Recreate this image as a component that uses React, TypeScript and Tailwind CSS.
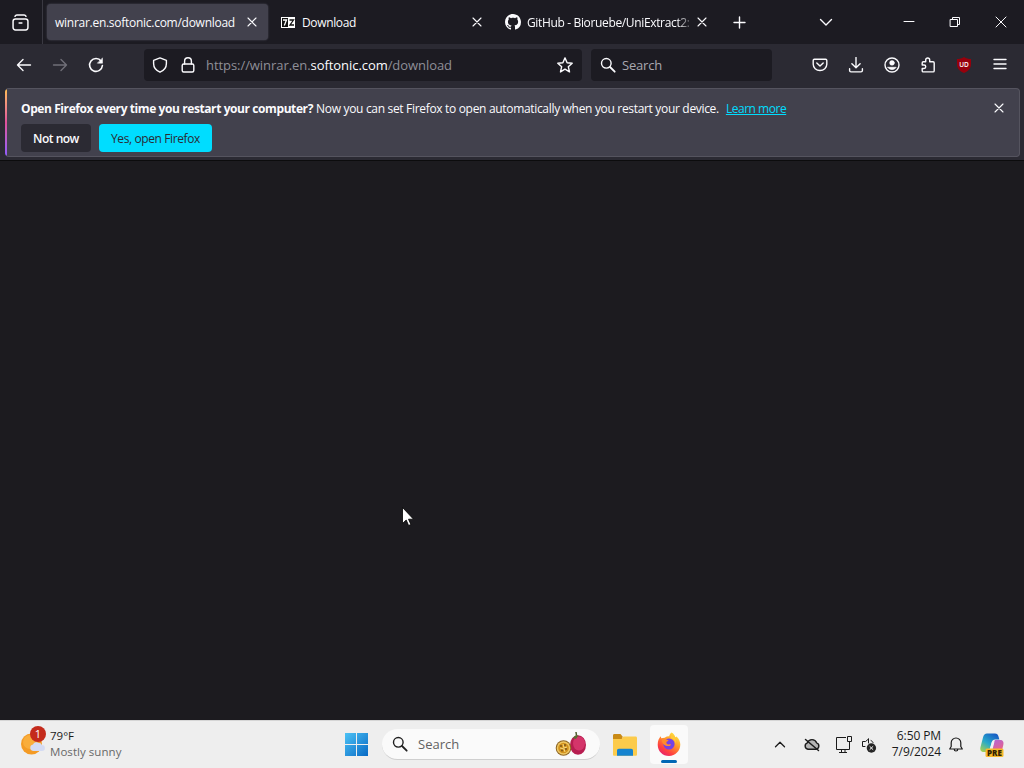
import type { ReactNode } from "react";

type IconProps = {
  children: ReactNode;
  className?: string;
};

// 16px grid, stroked with the current text colour
const Icon = ({ children, className = "size-4" }: IconProps) => (
  <svg
    viewBox="0 0 16 16"
    className={`shrink-0 ${className}`}
    fill="none"
    stroke="currentColor"
    strokeWidth="1.4"
    strokeLinecap="round"
    strokeLinejoin="round"
  >
    {children}
  </svg>
);

const CloseIcon = () => (
  <Icon>
    <path d="M4 4l8 8M12 4l-8 8" strokeWidth="1.1" />
  </Icon>
);

const SearchIcon = ({ className }: { className?: string }) => (
  <Icon className={className}>
    <circle cx="6.3" cy="6.3" r="4.8" />
    <path d="M10 10l4.7 4.7" strokeWidth="1.8" />
  </Icon>
);

const GitHubLogo = () => (
  <svg viewBox="0 0 16 16" className="size-4 shrink-0" fill="currentColor">
    <path d="M8 0C3.58 0 0 3.58 0 8c0 3.54 2.29 6.53 5.47 7.59.4.07.55-.17.55-.38 0-.19-.01-.82-.01-1.49-2.01.37-2.53-.49-2.69-.94-.09-.23-.48-.94-.82-1.13-.28-.15-.68-.52-.01-.53.63-.01 1.08.58 1.23.82.72 1.21 1.87.87 2.33.66.07-.52.28-.87.51-1.07-1.78-.2-3.64-.89-3.64-3.95 0-.87.31-1.59.82-2.15-.08-.2-.36-1.02.08-2.12 0 0 .67-.21 2.2.82.64-.18 1.32-.27 2-.27s1.36.09 2 .27c1.53-1.04 2.2-.82 2.2-.82.44 1.1.16 1.92.08 2.12.51.56.82 1.27.82 2.15 0 3.07-1.87 3.75-3.65 3.95.29.25.54.73.54 1.48 0 1.07-.01 1.93-.01 2.2 0 .21.15.46.55.38A8.01 8.01 0 0 0 16 8c0-4.42-3.58-8-8-8z" />
  </svg>
);

const SevenZipLogo = () => (
  <svg viewBox="0 0 14 11" className="h-[11px] w-3.5 shrink-0">
    <path d="M0 0h14v11H0z" fill="#fff" />
    <path d="M1 1h6v9H1z" fill="#111" />
    <path d="M2 3h3.5L3.3 8.5" fill="none" stroke="#fff" strokeWidth="1.3" />
    <path d="M8.5 3h4L9 8h4" fill="none" stroke="#111" strokeWidth="1.3" />
  </svg>
);

const TabBar = () => (
  <div className="flex h-11 items-center bg-[#1c1b22] text-[12px]">
    <div className="flex h-full w-[43px] items-center justify-center border-r border-[#3a3942] pr-0.5">
      <Icon className="size-[17px]">
        <rect x="1" y="4.7" width="14" height="10.3" rx="2.2" />
        <path d="M2.8 2.2C3.2 1.4 3.8 1 4.6 1h6.8c.8 0 1.4.4 1.8 1.2" />
        <path d="M6.7 8.4h2.6" />
      </Icon>
    </div>

    <div className="ml-1 flex h-9 w-[221px] items-center rounded bg-[#42414d] px-2 shadow-[0_0_2px_#52515e]">
      <span className="flex-1 pt-0.5 tracking-[-0.27px] whitespace-nowrap">
        winrar.en.softonic.com/download
      </span>
      <CloseIcon />
    </div>

    <div className="ml-1 flex h-9 w-[221px] items-center pr-2 pl-[9px]">
      <SevenZipLogo />
      <span className="ml-[7px] flex-1 pt-0.5 tracking-[-0.35px]">Download</span>
      <CloseIcon />
    </div>

    <div className="ml-1 flex h-9 w-[221px] items-center px-2">
      <GitHubLogo />
      <span className="ml-1.5 flex-1 mask-r-from-90% mask-r-to-100% pt-0.5 tracking-[-0.35px] whitespace-nowrap">
        GitHub - Bioruebe/UniExtract2:
      </span>
      <CloseIcon />
    </div>

    <Icon className="ml-3.5 size-4">
      <path d="M7.5 3v11M2 8.5h11" />
    </Icon>

    <div className="flex flex-1 items-center justify-end">
      <Icon className="mr-[52px] size-4">
        <path d="M2.5 5.5L8 11l5.5-5.5" />
      </Icon>
      <div className="flex w-[46px] justify-center">
        <Icon>
          <path d="M3 7.5h10" strokeWidth="1" />
        </Icon>
      </div>
      <div className="flex w-[46px] justify-center">
        <Icon>
          <path d="M3.5 5.5h7v7h-7zM5.5 5.5v-2h7v7h-2" strokeWidth="1" />
        </Icon>
      </div>
      <div className="flex w-[46px] justify-center">
        <Icon>
          <path d="M3 3l10 10M13 3L3 13" strokeWidth="1" />
        </Icon>
      </div>
    </div>
  </div>
);

const NavBar = () => (
  <div className="flex h-[42px] items-center bg-[#2b2a33] text-[13px]">
    <div className="flex w-36 pl-1.5">
      <div className="flex w-9 justify-center">
        <Icon>
          <path d="M14.5 8h-13M7 2.5L1.5 8 7 13.5" />
        </Icon>
      </div>
      <div className="flex w-9 justify-center text-[#706f78]">
        <Icon>
          <path d="M1.5 8h13M9 2.5L14.5 8 9 13.5" />
        </Icon>
      </div>
      <div className="flex w-9 justify-center">
        <Icon>
          <path d="M13.2 4.2A6.4 6.4 0 1 0 14.4 8.5" strokeWidth="1.6" />
          <path d="M14.5 1.2v5H9.6z" fill="currentColor" strokeWidth=".5" />
        </Icon>
      </div>
    </div>

    <div className="flex h-8 w-[438px] items-center rounded bg-[#1c1b22] pr-[9px] pl-2">
      <Icon>
        <path d="M8 .9l6.4 2.4v3.3c0 4-2.4 7-6.4 8.6-4-1.6-6.4-4.6-6.4-8.6V3.3z" />
      </Icon>
      <Icon className="ml-3 size-4">
        <rect x="2.2" y="7" width="11.6" height="8" rx="1.5" />
        <path d="M4.6 7V4.2a3.4 3.4 0 0 1 6.8 0V7" />
      </Icon>
      <span className="ml-2.5 flex-1 pt-0.5 tracking-[-0.06px] text-[#8f8f98]">
        https://winrar.en.<span className="text-[#fbfbfe]">softonic.com</span>/download
      </span>
      <Icon>
        <path d="M8 .9l2.1 4.8 5.1.5-3.9 3.5 1.2 5.2L8 12.2l-4.5 2.7 1.2-5.2L.8 6.2l5.1-.5z" />
      </Icon>
    </div>

    <div className="ml-[9px] flex h-8 w-[181px] items-center rounded bg-[#1c1b22] pl-[9px]">
      <SearchIcon className="size-4" />
      <span className="ml-1.5 pt-0.5 tracking-[-0.2px] text-[#a9a8b0]">Search</span>
    </div>

    <div className="ml-[30px] flex">
      <div className="flex w-9 justify-center">
        <Icon>
          <path d="M2.4 2.2h11.2c.7 0 1.2.5 1.2 1.2v3.8a6.8 6.3 0 0 1-13.6 0V3.4c0-.7.5-1.2 1.2-1.2z" />
          <path d="M4.8 6L8 9.1 11.2 6" />
        </Icon>
      </div>
      <div className="flex w-9 justify-center">
        <Icon>
          <path d="M8 .5v10M3.9 6.7L8 10.8l4.1-4.1M1.6 11.7v1.8c0 .8.6 1.4 1.4 1.4h10c.8 0 1.4-.6 1.4-1.4v-1.8" />
        </Icon>
      </div>
      <div className="flex w-9 justify-center">
        <Icon>
          <circle cx="8" cy="8" r="7" />
          <circle cx="8" cy="5.9" r="2.4" fill="currentColor" strokeWidth=".5" />
          <path
            d="M3.8 10.3h8.4A4.6 4.6 0 0 1 8 12.6a4.6 4.6 0 0 1-4.2-2.3z"
            fill="currentColor"
            strokeWidth=".7"
          />
        </Icon>
      </div>
      <div className="flex w-9 justify-center">
        <Icon>
          <path d="M2.2 8V6c0-.7.4-1.2 1.1-1.2h2.4V3a2 2 0 0 1 4 0v1.8h3.4c.7 0 1.1.5 1.1 1.2v7.7c0 .7-.4 1.2-1.1 1.2H3.3c-.7 0-1.1-.5-1.1-1.2v-2.2H4a1.75 1.75 0 0 0 0-3.5z" />
        </Icon>
      </div>
      <div className="flex w-9 justify-center">
        <svg viewBox="0 0 16 16" className="size-4">
          <path
            d="M8 0c2.3 1.5 4.4 2 7 2v5c0 4.5-2.6 7.2-7 9-4.4-1.8-7-4.5-7-9V2c2.6 0 4.7-.5 7-2z"
            fill="#97000c"
          />
          <text x="8" y="9.8" textAnchor="middle" fill="#fff" fontSize="6.5" fontWeight="600">
            UD
          </text>
        </svg>
      </div>
      <div className="flex w-9 justify-center">
        <Icon>
          <path d="M2 2.5h12M2 7h12M2 11.5h12" />
        </Icon>
      </div>
    </div>
  </div>
);

const NotificationBar = () => (
  <div className="h-[75px] border-b border-[#0c0c0d] bg-[#2b2a33] pt-0.5 pr-1 pl-[5px]">
    <div className="flex h-[69px] overflow-hidden rounded border border-l-0 border-[#55545f] bg-[#42414d] text-[12px]">
      <div className="w-0.5 bg-linear-to-b from-[#ffbd4f] via-[#e0509a] to-[#9059ff]" />
      <div className="flex-1 pt-[11px] pl-3.5">
        <p className="h-[18px] leading-[18px] whitespace-nowrap">
          <b className="tracking-[-0.41px]">Open Firefox every time you restart your computer?</b>{" "}
          <span className="tracking-[-0.32px]">
            Now you can set Firefox to open automatically when you restart your device.
          </span>
          <a className="ml-[7px] tracking-[-0.47px] text-[#00ddff] underline">Learn more</a>
        </p>
        <div className="mt-1.5 flex gap-2">
          <button className="h-7 w-[70px] rounded bg-[#2b2a33] pt-0.5 font-semibold tracking-[-0.5px] whitespace-nowrap">
            Not now
          </button>
          <button className="h-7 w-[113px] rounded bg-[#00ddff] pt-0.5 tracking-[-0.39px] whitespace-nowrap text-[#2b2a33]">
            Yes, open Firefox
          </button>
        </div>
      </div>
      <div className="pt-[11px] pr-3">
        <CloseIcon />
      </div>
    </div>
  </div>
);

const WeatherIcon = () => (
  <svg viewBox="0 0 28 30" className="h-[30px] w-7 shrink-0">
    <circle cx="11.5" cy="18" r="10.5" fill="#f49b25" />
    <circle cx="10" cy="16" r="7" fill="#f9ad3b" />
    <path
      d="M13 25a3.3 3.3 0 0 1 0-6.5 4 4 0 0 1 6-1.5c1.5-.2 2.5.7 2.8 2a2.9 2.9 0 0 1 .2 6z"
      fill="#d4dbf3"
    />
    <circle cx="18" cy="8" r="8" fill="#c42b1c" />
    <text x="18" y="12" textAnchor="middle" fill="#fff" fontSize="11">
      1
    </text>
  </svg>
);

const WindowsLogo = () => (
  <svg viewBox="0 0 24 24" className="size-6 shrink-0">
    <defs>
      <linearGradient id="win" x1="0" y1="0" x2="1" y2="1">
        <stop offset="0" stopColor="#4cc2f5" />
        <stop offset="1" stopColor="#0869c4" />
      </linearGradient>
    </defs>
    <path d="M1 0h11v11H1zM13 0h11v11H13zM1 12h11v11H1zM13 12h11v11H13z" fill="url(#win)" />
  </svg>
);

const PassionFruit = () => (
  <svg viewBox="0 0 32 26" className="h-[26px] w-8 shrink-0">
    <path d="M21.5 4.5L21 1" stroke="#4d5a2b" strokeWidth="1.5" />
    <ellipse cx="23" cy="14" rx="8" ry="9.8" fill="#b71d50" />
    <ellipse cx="24" cy="12.5" rx="6" ry="7" fill="#d4356a" />
    <path d="M18 7c1-2 3-3 4-3l3 2-2-1-2 3z" fill="#597032" />
    <circle cx="8.5" cy="17" r="7.8" fill="#8c6423" />
    <circle cx="8.5" cy="17" r="6.8" fill="#efc866" />
    <circle cx="8.5" cy="17" r="5.3" fill="#d2921d" />
    <g fill="#7d551b">
      <circle cx="6" cy="15" r="1" />
      <circle cx="10" cy="14" r="1" />
      <circle cx="11" cy="18" r="1" />
      <circle cx="7" cy="19.5" r="1" />
    </g>
    <path d="M8 13l1 4 3-1M5 17l4 1 1 3" stroke="#f5d982" fill="none" />
  </svg>
);

const ExplorerIcon = () => (
  <svg viewBox="0 0 26 24" className="h-6 w-[26px] shrink-0">
    <path d="M1 2.5C1 1.5 1.6 1 2.5 1h6l2 2.5V8H1z" fill="#c98a15" />
    <path
      d="M1 6h8.5l2-2.5h12c1 0 1.5.6 1.5 1.5v16.5c0 .8-.5 1.3-1.3 1.3H2.3c-.8 0-1.3-.5-1.3-1.3z"
      fill="#fccb4b"
    />
    <path d="M5 22.8v-5.3c0-1 .8-1.8 1.8-1.8h12.4c1 0 1.8.8 1.8 1.8v5.3z" fill="#1583cf" />
  </svg>
);

const FirefoxLogo = () => (
  <svg viewBox="0 0 24 24" className="size-6 shrink-0">
    <defs>
      <linearGradient id="fox" x1=".85" y1="0" x2=".2" y2="1">
        <stop offset="0" stopColor="#fff044" />
        <stop offset=".4" stopColor="#ff9a2b" />
        <stop offset=".75" stopColor="#ff4040" />
        <stop offset="1" stopColor="#e21c75" />
      </linearGradient>
    </defs>
    <path
      d="M14.5.5c2 1 3.3 2.7 3.8 4.7l1.2-.8c2.5 2.2 3.8 5 3.8 8.2C23.3 19 18.3 24 12 24S.7 19.2.7 12.7c0-3.8 1.2-6.5 3-8.5l.6 2 3.4-.5c1.4-1 3-1.5 4.5-1.4.3-1.5 1-2.8 2.3-3.8z"
      fill="url(#fox)"
    />
    <circle cx="12" cy="12" r="5.6" fill="#7542e5" />
    <path
      d="M5 7.5c2-1 3.5-.8 5 .3l1.5.5c0 1-1.5 1-2 1.8-.4 1 .2 2 1.5 2.3 1.2.2 2-.3 2.8 0 .4.3-.5 1.5-2.500 1.700-3 .2-5.700-1.800-6.300-4.600z"
      fill="#ff8b2d"
    />
    <path d="M14 6c3 1 5 3.500 4.500 6.500 1-3-.2-6-1.500-7.500L14 4z" fill="#ffcc38" />
  </svg>
);

const CopilotLogo = () => (
  <svg viewBox="0 0 26 26" className="size-[26px] shrink-0">
    <defs>
      <linearGradient id="copilot-a" x1=".7" y1="0" x2="0" y2="1">
        <stop offset="0" stopColor="#175fc5" />
        <stop offset=".5" stopColor="#27a9cb" />
        <stop offset="1" stopColor="#b6d741" />
      </linearGradient>
      <linearGradient id="copilot-b" x1="0" y1="0" x2=".5" y2="1">
        <stop offset="0" stopColor="#a865e5" />
        <stop offset="1" stopColor="#f2627d" />
      </linearGradient>
    </defs>
    <path
      d="M8 1.500h8c2 0 3 1 3.500 3l.9 3h-4.200c-2 0-3 1-3.500 3L11 17c-.5 2-1.500 3-3.500 3H5c-3 0-4.300-2-3.500-5L4 5.500c.6-2.500 2-4 4-4z"
      fill="url(#copilot-a)"
    />
    <path d="M16 8h5c3 0 4 2 3.300 5l-1.500 6c-.5 2-2 3-4 3H9c2 0 3-1 3.500-3L15 10z" fill="url(#copilot-b)" />
    <path d="M13 9.500h2.500l-2 8H10.500z" fill="#eef0f5" />
    <rect x="6.500" y="16.500" width="18" height="8.500" rx="1.500" fill="#f7b92b" />
    <text x="15.500" y="23.800" textAnchor="middle" fontSize="8" fontWeight="800" fill="#332100">
      PRE
    </text>
  </svg>
);

const Taskbar = () => (
  <div className="flex h-12 items-center border-t border-[#d5d5d5] bg-[#eeeeee] text-[12px] text-[#1b1b1b]">
    <div className="flex w-[344px] items-center pb-0.5 pl-5">
      <div className="-mt-1.5">
        <WeatherIcon />
      </div>
      <div className="ml-0.5 text-[11.5px] leading-4">
        <p>79°F</p>
        <p className="tracking-[0.05px] text-[#686868]">Mostly sunny</p>
      </div>
    </div>

    <WindowsLogo />

    <div className="ml-3.5 flex h-[31px] w-[218px] items-center rounded-full border-b border-[#cfcfcf] bg-[#fafafa] pr-[13px] pl-2.5">
      <SearchIcon className="size-4 text-[#202020]" />
      <span className="flex-1 pt-0.5 pl-2.5 text-[13px] text-[#626262]">Search</span>
      <PassionFruit />
    </div>

    <div className="ml-3">
      <ExplorerIcon />
    </div>

    <div className="ml-3 flex h-[39px] w-[38px] flex-col items-center rounded bg-[#fafafa] pt-[7px]">
      <FirefoxLogo />
      <div className="mt-1 h-[3px] w-4 rounded-full bg-[#0067b5]" />
    </div>

    <div className="flex flex-1 items-center justify-end">
      <Icon>
        <path d="M3.5 9.7L8 5.2l4.5 4.5" strokeWidth="1.3" />
      </Icon>
      <Icon className="ml-4 size-4">
        <path
          d="M4 12.2a3.3 3.3 0 0 1-.6-6.4 4.9 4.9 0 0 1 9.2 0 3.3 3.3 0 0 1-.6 6.4z"
          fill="#b5b5b5"
          strokeWidth="1.4"
        />
        <path d="M1.5 2.5l13 11" strokeWidth="1.5" />
      </Icon>
      <svg viewBox="0 0 18 18" className="ml-[15px] size-[18px]" fill="none" stroke="currentColor">
        <path d="M11 1.5H1.5v12h13V8M4 16.5h8M6.5 13.5v3M10 13.5v3" />
        <path d="M12.5.5h4v5h-4zM14.500 5.500V9" />
      </svg>
      <Icon className="ml-2 size-4">
        <path d="M7.5 2l-3 2.500h-3v5H4M7.500 2v4M10 3.500c1 .5 1.500 1 2 2" strokeWidth="1" />
        <circle cx="10.400" cy="11" r="4.700" fill="#242424" stroke="none" />
        <path d="M8.900 9.500l3 3M11.900 9.500l-3 3" stroke="#fff" strokeWidth="1" />
      </Icon>
      <div className="ml-3 w-[52px] pb-0.5 text-right text-[12px] leading-4 tracking-[-0.1px] whitespace-nowrap">
        <p>6:50 PM</p>
        <p>7/9/2024</p>
      </div>
      <Icon className="ml-[7px] size-4">
        <path
          d="M3.200 9.500V5.800a4.800 4.800 0 0 1 9.600 0v3.700l1.500 2.500H1.700zM6.200 12.200a1.800 1.800 0 0 0 3.600 0"
          strokeWidth="1.200"
        />
      </Icon>
      <div className="mr-[19px] ml-[15px]">
        <CopilotLogo />
      </div>
    </div>
  </div>
);

export default function App() {
  return (
    <div className="flex h-screen w-full flex-col overflow-hidden bg-[#1c1b1f] font-['Open_Sans','Noto_Sans',sans-serif] text-[#fbfbfe]">
      <TabBar />
      <NavBar />
      <NotificationBar />
      <main className="flex-1" />
      <Taskbar />

      {/* Mouse pointer floats above the page */}
      <svg viewBox="0 0 12 20" className="absolute top-[507px] left-[402px] h-5 w-3">
        <path d="M.5.5v16l3.7-3.5 2.4 5.5 2.3-1-2.4-5.3h5z" fill="#fff" stroke="#000" strokeWidth=".8" />
      </svg>
    </div>
  );
}
